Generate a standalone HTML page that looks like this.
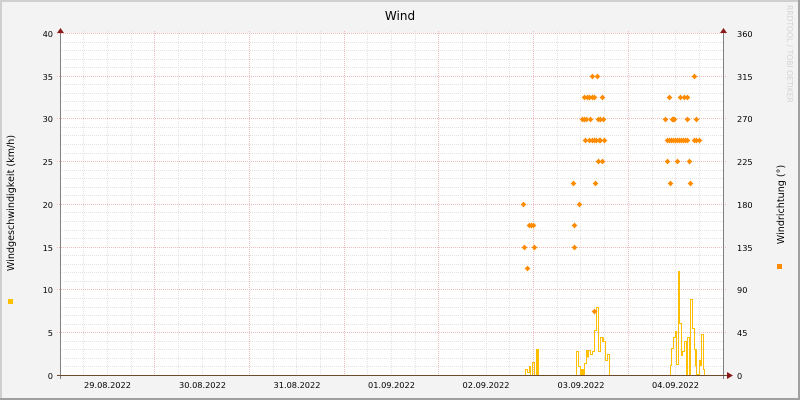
<!DOCTYPE html>
<html><head><meta charset="utf-8"><style>
html,body{margin:0;padding:0;width:800px;height:400px;overflow:hidden;background:#f3f3f3}
svg{display:block}
text{font-family:"DejaVu Sans",sans-serif;font-size:8.2px;fill:#000}
.l{text-anchor:end}
.c{text-anchor:middle}
</style></head><body>
<svg width="800" height="400" viewBox="0 0 800 400" xmlns="http://www.w3.org/2000/svg">
<rect width="800" height="400" fill="#f3f3f3"/>
<path d="M0 0H800V2H2V400H0Z" fill="#cfcfcf"/>
<path d="M798 0H800V400H0V398H798Z" fill="#a0a0a0"/>
<rect x="60" y="33" width="664" height="343" fill="#fff"/>
<g shape-rendering="crispEdges" fill="none" stroke-width="1">
<path stroke="#e2e2e2" stroke-dasharray="1 1" d="M60 42.5H724M60 50.5H724M60 59.5H724M60 67.5H724M60 84.5H724M60 93.5H724M60 101.5H724M60 110.5H724M60 127.5H724M60 135.5H724M60 144.5H724M60 153.5H724M60 170.5H724M60 178.5H724M60 187.5H724M60 195.5H724M60 212.5H724M60 221.5H724M60 230.5H724M60 238.5H724M60 255.5H724M60 264.5H724M60 272.5H724M60 281.5H724M60 298.5H724M60 307.5H724M60 315.5H724M60 324.5H724M60 341.5H724M60 349.5H724M60 358.5H724M60 366.5H724"/>
<path stroke="#e2e2e2" stroke-dasharray="1 1" d="M83.5 31V376M107.5 31V376M131.5 31V376M178.5 31V376M202.5 31V376M225.5 31V376M273.5 31V376M296.5 31V376M320.5 31V376M367.5 31V376M391.5 31V376M415.5 31V376M462.5 31V376M486.5 31V376M509.5 31V376M557.5 31V376M580.5 31V376M604.5 31V376M652.5 31V376M675.5 31V376M699.5 31V376"/>
<path stroke="#eebcbc" stroke-dasharray="1 1" d="M57 33.5H727M57 76.5H727M57 118.5H727M57 161.5H727M57 204.5H727M57 247.5H727M57 289.5H727M57 332.5H727"/>
<path stroke="#eebcbc" stroke-dasharray="1 1" d="M154.5 31V376M249.5 31V376M344.5 31V376M438.5 31V376M533.5 31V376M628.5 31V376"/>
<path stroke="#ffbf00" d="M525.5 375.5V369.5H527.5V372.5H529.5V366.5H530.5V375.5M532.5 375.5V362.5H534.5V375.5M536.5 375.5V349.5H538.5V375.5M537.5 349.5V375.5"/>
<path stroke="#ffbf00" d="M576.5 375.5V351.5H578.5V366.5H580.5V375.5M581.5 375.5V369.5H584.5V375.5M582.5 369.5V375.5M583.5 369.5V375.5M584.5 375.5V363.5H586.5V350.5H590.5V354.5H592.5V351.5H594.5V330.5H596.5V307.5H598.5V351.5H600.5V337.5H602.5V341.5H605.5V360.5H607.5V354.5H609.5V375.5"/>
<path stroke="#ffbf00" d="M587.5 350.5V357.5M588.5 350.5V357.5M603.5 337.5V341.5"/>
<path stroke="#ffbf00" d="M670.5 375.5V365.5H671.5V348.5H673.5V337.5H675.5V331.5H676.5V364.5H678.5V271.5H679.5V323.5H681.5V355.5H682.5V351.5H684.5V341.5H686.5V375.5M687.5 375.5V337.5H689.5V375.5M690.5 375.5V299.5H692.5V328.5H694.5V349.5H696.5V374.5H699.5V360.5H701.5V334.5H703.5V369.5H704.5V375.5"/>
<path stroke="#ffbf00" d="M675.5 331.5V337.5M694.5 349.5H696.5V366.5M695.5 349.5V366.5M699.5 360.5H701.5V366M700.5 360.5V366"/>
<path stroke="#808080" d="M60.5 31V379M723.5 31V379"/>
<path stroke="#6f4a2a" d="M57 375.5H727"/>
</g>
<defs><path id="m" d="M-2.5 -0.5H-1.5V-1.5H-0.5V-2.5H0.5V-1.5H1.5V-0.5H2.5V0.5H1.5V1.5H0.5V2.5H-0.5V1.5H-1.5V0.5H-2.5Z" fill="#ff8c00" stroke="#ff8c00" stroke-width="0.35"/></defs>
<g>
<use href="#m" x="592.5" y="76.5"/><use href="#m" x="597.5" y="76.5"/><use href="#m" x="694.5" y="76.5"/>
<use href="#m" x="584.5" y="97.5"/><use href="#m" x="587.5" y="97.5"/><use href="#m" x="589.5" y="97.5"/><use href="#m" x="592.5" y="97.5"/><use href="#m" x="594.5" y="97.5"/><use href="#m" x="602.5" y="97.5"/><use href="#m" x="669.5" y="97.5"/><use href="#m" x="680.5" y="97.5"/><use href="#m" x="684.5" y="97.5"/><use href="#m" x="687.5" y="97.5"/>
<use href="#m" x="582.5" y="119.5"/><use href="#m" x="584.5" y="119.5"/><use href="#m" x="586.5" y="119.5"/><use href="#m" x="590.5" y="119.5"/><use href="#m" x="598.5" y="119.5"/><use href="#m" x="600.5" y="119.5"/><use href="#m" x="603.5" y="119.5"/><use href="#m" x="665.5" y="119.5"/><use href="#m" x="672.5" y="119.5"/><use href="#m" x="673.5" y="119.5"/><use href="#m" x="674.5" y="119.5"/><use href="#m" x="687.5" y="119.5"/><use href="#m" x="696.5" y="119.5"/>
<use href="#m" x="585.5" y="140.5"/><use href="#m" x="589.5" y="140.5"/><use href="#m" x="592.5" y="140.5"/><use href="#m" x="594.5" y="140.5"/><use href="#m" x="596.5" y="140.5"/><use href="#m" x="599.5" y="140.5"/><use href="#m" x="600.5" y="140.5"/><use href="#m" x="604.5" y="140.5"/><use href="#m" x="667.5" y="140.5"/><use href="#m" x="669.5" y="140.5"/><use href="#m" x="671.5" y="140.5"/><use href="#m" x="673.5" y="140.5"/><use href="#m" x="675.5" y="140.5"/><use href="#m" x="677.5" y="140.5"/><use href="#m" x="679.5" y="140.5"/><use href="#m" x="681.5" y="140.5"/><use href="#m" x="683.5" y="140.5"/><use href="#m" x="685.5" y="140.5"/><use href="#m" x="687.5" y="140.5"/><use href="#m" x="694.5" y="140.5"/><use href="#m" x="696.5" y="140.5"/><use href="#m" x="699.5" y="140.5"/>
<use href="#m" x="598.5" y="161.5"/><use href="#m" x="602.5" y="161.5"/><use href="#m" x="667.5" y="161.5"/><use href="#m" x="677.5" y="161.5"/><use href="#m" x="689.5" y="161.5"/>
<use href="#m" x="573.5" y="183.5"/><use href="#m" x="595.5" y="183.5"/><use href="#m" x="670.5" y="183.5"/><use href="#m" x="690.5" y="183.5"/>
<use href="#m" x="523.5" y="204.5"/><use href="#m" x="579.5" y="204.5"/>
<use href="#m" x="529.5" y="225.5"/><use href="#m" x="531.5" y="225.5"/><use href="#m" x="533.5" y="225.5"/><use href="#m" x="574.5" y="225.5"/>
<use href="#m" x="524.5" y="247.5"/><use href="#m" x="534.5" y="247.5"/><use href="#m" x="574.5" y="247.5"/>
<use href="#m" x="527.5" y="268.5"/>
<use href="#m" x="594.5" y="311.5"/>
</g>
<path d="M60.5 28L64 33H57Z M723.5 28L727 33H720Z M733 375.5L727 372V379Z" fill="#8b1a1a"/>
<rect x="8" y="299" width="5" height="5" fill="#ffc000"/>
<rect x="777" y="264" width="5" height="5" fill="#ff8c00"/>
<text x="400" y="20" class="c" style="font-size:12px">Wind</text>
<text class="l" x="53" y="37">40</text><text class="l" x="53" y="80">35</text><text class="l" x="53" y="122">30</text><text class="l" x="53" y="165">25</text><text class="l" x="53" y="208">20</text><text class="l" x="53" y="251">15</text><text class="l" x="53" y="293">10</text><text class="l" x="53" y="336">5</text><text class="l" x="53" y="379">0</text>
<text x="737" y="37">360</text><text x="737" y="80">315</text><text x="737" y="122">270</text><text x="737" y="165">225</text><text x="737" y="208">180</text><text x="737" y="251">135</text><text x="737" y="293">90</text><text x="737" y="336">45</text><text x="737" y="379">0</text>
<text class="c" x="107.5" y="388">29.08.2022</text><text class="c" x="202.5" y="388">30.08.2022</text><text class="c" x="297" y="388">31.08.2022</text><text class="c" x="391.5" y="388">01.09.2022</text><text class="c" x="486" y="388">02.09.2022</text><text class="c" x="581" y="388">03.09.2022</text><text class="c" x="675.5" y="388">04.09.2022</text>
<text class="c" transform="translate(14,203) rotate(-90)" style="font-size:9.6px">Windgeschwindigkeit (km/h)</text>
<text class="c" transform="translate(784,204.5) rotate(-90)" style="font-size:9.6px">Windrichtung (°)</text>
<text transform="translate(787,5) rotate(90)" style="font-size:7.6px;fill:#d4d4d4">RRDTOOL / TOBI OETIKER</text>
</svg>
</body></html>
